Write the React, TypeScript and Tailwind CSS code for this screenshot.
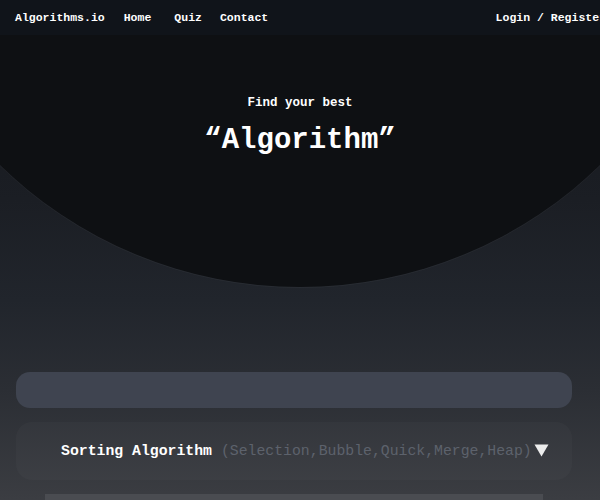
import { useState } from "react";

const mono = { fontFamily: '"Liberation Mono", "DejaVu Sans Mono", monospace' };

function NavBar() {
  return (
    <nav className="relative z-10 flex h-[35px] items-center bg-[#10141a] px-[15px] text-[11.5px] font-bold text-white">
      <span>Algorithms.io</span>
      <a className="ml-[19px]">Home</a>
      <a className="ml-[23px]">Quiz</a>
      <a className="ml-[18px]">Contact</a>
      <a className="ml-auto mr-[-21px] whitespace-nowrap">Login / Register</a>
    </nav>
  );
}

export default function App() {
  const [open, setOpen] = useState(false);
  return (
    <div
      className="relative h-[500px] w-full overflow-hidden bg-[linear-gradient(180deg,#14171c_0%,#1b1e24_40%,#21252c_60%,#2b2e34_78%,#3b3d42_100%)]"
      style={mono}
    >
      {/* big dark circle behind the hero */}
      <div className="absolute left-1/2 top-[-573px] h-[860px] w-[860px] -translate-x-1/2 rounded-full bg-[#0e1013] shadow-[0_1px_0_rgba(255,255,255,0.04)]" />

      <NavBar />

      <section className="relative flex flex-col items-center pt-[60px] text-white">
        <h3 className="text-[12.5px] font-bold leading-4">Find your best</h3>
        <h1 className="mt-[12px] text-[29px] font-bold leading-9">“Algorithm”</h1>
      </section>

      <div className="relative ml-4 mr-[28px] mt-[213px] h-9 rounded-[14px] bg-[#3f4450]" />

      <div
        onClick={() => setOpen(!open)}
        className="relative ml-4 mr-[28px] mt-[14px] flex h-[58px] cursor-pointer items-center rounded-2xl bg-white/[0.025] pl-[45px] text-[14.8px]"
      >
        <span className="font-bold text-white">Sorting Algorithm</span>
        <span className="ml-[9px] text-[#5d626c]">(Selection,Bubble,Quick,Merge,Heap)</span>
        <svg className="ml-[2px] mb-[2px]" width="15" height="13" viewBox="0 0 15 13">
          <polygon points="0.5,0.5 14.5,0.5 7.5,12.5" fill="#ececec" />
        </svg>
      </div>

      <div className="relative ml-[45px] mt-[14px] h-6 w-[498px] bg-[#4a4c51]" />
    </div>
  );
}
